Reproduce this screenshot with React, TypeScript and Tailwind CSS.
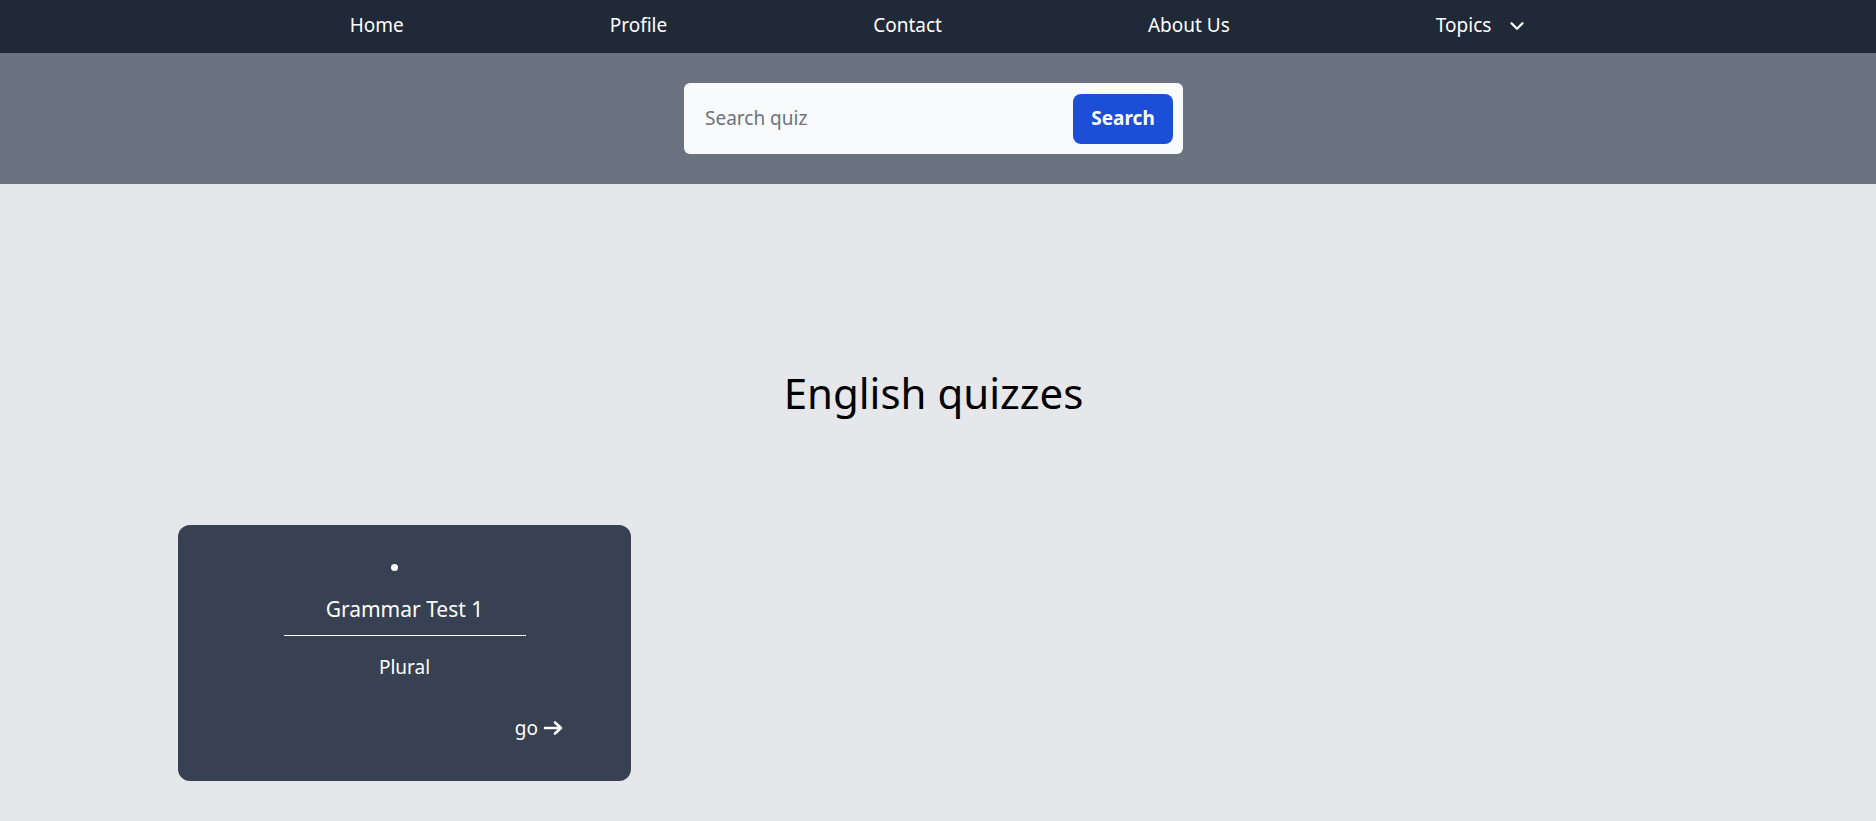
import React from 'react';
import { ChevronDown } from 'lucide-react';

const navLinks = ['Home', 'Profile', 'Contact', 'About Us'];

const QuizCard: React.FC<{ title: string; topic: string }> = ({ title, topic }) => {
  return (
    <div className="w-[453px] h-[256px] bg-[#374151] rounded-[12px] flex flex-col items-center pt-[39px] text-white">
      <span className="w-[7px] h-[7px] rounded-full bg-white mr-[21px]" />
      <h2 className="mt-[23px] text-[21px] leading-[30px]">{title}</h2>
      <hr className="mt-[11px] w-[242px] border-t border-white" />
      <p className="mt-[17px] text-[19px] leading-[28px]">{topic}</p>
      <a href="#" className="mt-[33px] self-end mr-[68px] flex items-center gap-[5px] text-[19px] leading-[28px]">
        go
        <svg viewBox="0 0 20 16" className="w-[20px] h-[16px]" fill="none" stroke="currentColor" strokeWidth={2.6} strokeLinecap="round" strokeLinejoin="round">
          <path d="M2 8H18M12 2.5L18 8L12 13.5" />
        </svg>
      </a>
    </div>
  );
};

const App: React.FC = () => {
  return (
    <div className="min-h-screen bg-[#e5e7eb] font-['Noto_Sans',sans-serif]">
      <nav className="h-[53px] bg-[#1f2937] flex items-center justify-center gap-[206px] pl-[2px] pb-[2px] text-white text-[19px]">
        {navLinks.map((link) => (
          <a key={link} href="#" className="leading-none">
            {link}
          </a>
        ))}
        <button className="flex items-center gap-[15px] leading-none">
          Topics
          <ChevronDown className="w-[22px] h-[22px]" strokeWidth={2.5} />
        </button>
      </nav>

      <div className="bg-[#6b7280] py-[30px] pr-[9px] flex justify-center">
        <form className="w-[499px] h-[71px] bg-[#f9fafb] rounded-[6px] flex items-center pl-[21px] pr-[10px]">
          <input
            type="text"
            placeholder="Search quiz"
            className="flex-1 min-w-0 bg-transparent outline-none text-[19px] text-gray-700 placeholder:text-[#6b7280]"
          />
          <button type="button" className="w-[100px] h-[50px] rounded-[8px] bg-[#1d4ed8] text-white font-bold text-[19px]">
            Search
          </button>
        </form>
      </div>

      <main className="px-[178px]">
        <h1 className="mt-[182px] pr-[9px] text-center text-[42px] leading-[54px] text-black">English quizzes</h1>
        <div className="mt-[105px] flex">
          <QuizCard title="Grammar Test 1" topic="Plural" />
        </div>
      </main>
    </div>
  );
};

export default App;
